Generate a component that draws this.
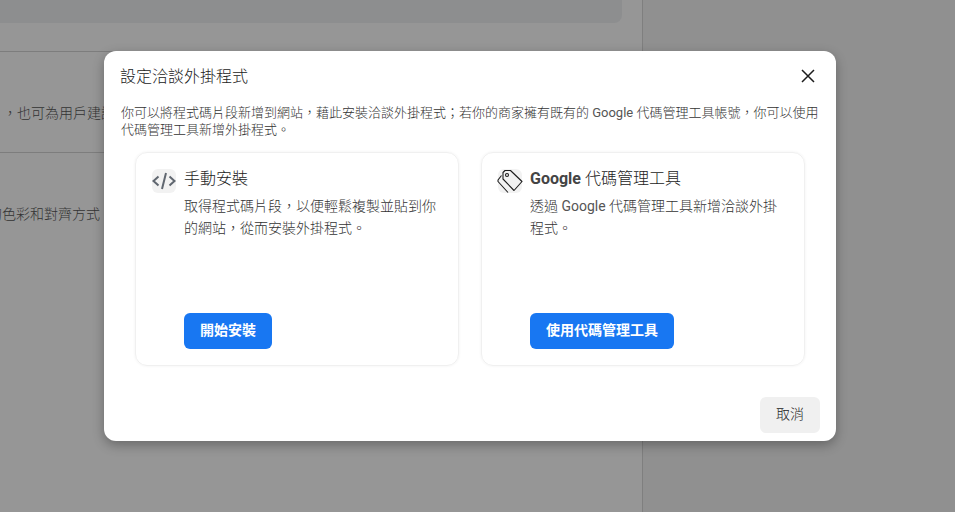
<style>
:global(body){margin:0;background:#959595;}
.page{position:relative;width:955px;height:512px;overflow:hidden;display:flex;font-family:Roboto,"Noto Sans CJK TC",sans-serif;color:#1c1c1c;background:#969696;}
.main{width:643px;height:512px;box-sizing:border-box;border-right:1px solid #7f7f7f;flex:none;}
.topcard{width:622px;height:23px;background:#8d8e8f;border-radius:0 0 8px 0;}
.row{border-bottom:1px solid #7d7d7d;height:100px;box-sizing:border-box;font-size:14px;font-weight:300;line-height:20px;color:#333;white-space:nowrap;overflow:hidden;display:flex;align-items:center;}
.first{margin-top:28px;height:102px;border-top:1px solid #7d7d7d;padding-top:22px;}
.first span{margin-left:3px;}
.second{border:none;height:120px;padding-top:2px;}
.second span{margin-left:-12px;}
.side{flex:1;background:#909090;}
.modal{position:absolute;left:104px;top:51px;width:732px;height:390px;box-sizing:border-box;background:#fff;border-radius:12px;box-shadow:0 4px 12px rgba(0,0,0,.3);padding:0 16px 8px 17px;display:flex;flex-direction:column;}
.head{display:flex;align-items:center;justify-content:space-between;height:50px;}
h2{margin:0;font-size:16px;font-weight:300;line-height:50px;color:#222;position:relative;top:1px;left:-1px;}
.close{border:0;background:none;padding:0;width:16px;height:16px;display:flex;margin-right:4px;}
.desc{margin:3px 0 0;height:34px;font-size:13px;font-weight:300;line-height:17px;color:#333;white-space:nowrap;}
.latin{font-weight:400;color:#555;}
.cards{display:flex;gap:22px;margin:14px 0 0 14px;}
.card{width:324px;height:214px;box-sizing:border-box;border:1px solid #f0f0f0;border-radius:12px;box-shadow:0 0 3px rgba(0,0,0,.06);padding:15px 16px 16px;display:flex;gap:8px;}
.ic{width:24px;height:24px;border-radius:6px;background:#f2f2f2;flex:none;margin-top:1px;}
.ic svg{display:block;overflow:visible;}
.body{flex:1;display:flex;flex-direction:column;align-items:flex-start;}
h3{margin:0;font-size:16px;font-weight:300;line-height:22px;color:#222;}
h3 b{font-weight:700;color:#444;}
.body p{margin:5px 0 0;font-size:14px;font-weight:300;line-height:22px;color:#333;}
.btn{margin-top:auto;border:0;border-radius:6px;background:#1877f2;color:#fff;font:700 14px/34px Roboto,"Noto Sans CJK TC",sans-serif;height:36px;padding:0 16px 2px;box-sizing:border-box;}
.foot{margin-top:auto;display:flex;justify-content:flex-end;}
.cancel{border:0;border-radius:6px;background:#f0f0f0;color:#222;font:300 14px/34px Roboto,"Noto Sans CJK TC",sans-serif;width:60px;height:36px;padding:0 0 2px;box-sizing:border-box;}
</style>

<div class="page" lang="zh-TW">
  <div class="main">
    <div class="topcard"></div>
    <div class="row first"><span>，也可為用戶建議</span></div>
    <div class="row second"><span>的色彩和對齊方式</span></div>
  </div>
  <div class="side"></div>
  <div class="modal">
    <div class="head">
      <h2>設定洽談外掛程式</h2>
      <button class="close" aria-label="關閉"><svg width="16" height="16" viewBox="0 0 16 16"><path d="M2 2l12 12M14 2L2 14" stroke="#1c1c1c" stroke-width="1.5" fill="none"/></svg></button>
    </div>
    <p class="desc">你可以將程式碼片段新增到網站，藉此安裝洽談外掛程式；若你的商家擁有既有的 <span class="latin">Google</span> 代碼管理工具帳號，你可以使用<br>代碼管理工具新增外掛程式。</p>
    <div class="cards">
      <div class="card">
        <div class="ic"><svg width="24" height="24" viewBox="0 0 24 24"><path d="M6.500 7.500 1.500 12l5 4.500M17.500 7.500l5 4.500-5 4.500M14 4 10 20" stroke="#606770" stroke-width="2" fill="none"/></svg></div>
        <div class="body">
          <h3>手動安裝</h3>
          <p>取得程式碼片段，以便輕鬆複製並貼到你的網站，從而安裝外掛程式。</p>
          <button class="btn">開始安裝</button>
        </div>
      </div>
      <div class="card">
        <div class="ic"><svg width="24" height="24" viewBox="0 0 24 24" fill="none" stroke="#1c1c1c" stroke-width="1.1"><path d="M7 1.500h5.500L24 12.500l-8 9L5 10V3.500z" stroke-linejoin="round"/><circle cx="9" cy="6" r="1.500"/><path d="M3.500 6.500 0 11v1.500L10 23.500" stroke-linejoin="round"/></svg></div>
        <div class="body">
          <h3><b>Google</b> 代碼管理工具</h3>
          <p>透過 <span class="latin">Google</span> 代碼管理工具新增洽談外掛程式。</p>
          <button class="btn">使用代碼管理工具</button>
        </div>
      </div>
    </div>
    <div class="foot"><button class="cancel">取消</button></div>
  </div>
</div>
